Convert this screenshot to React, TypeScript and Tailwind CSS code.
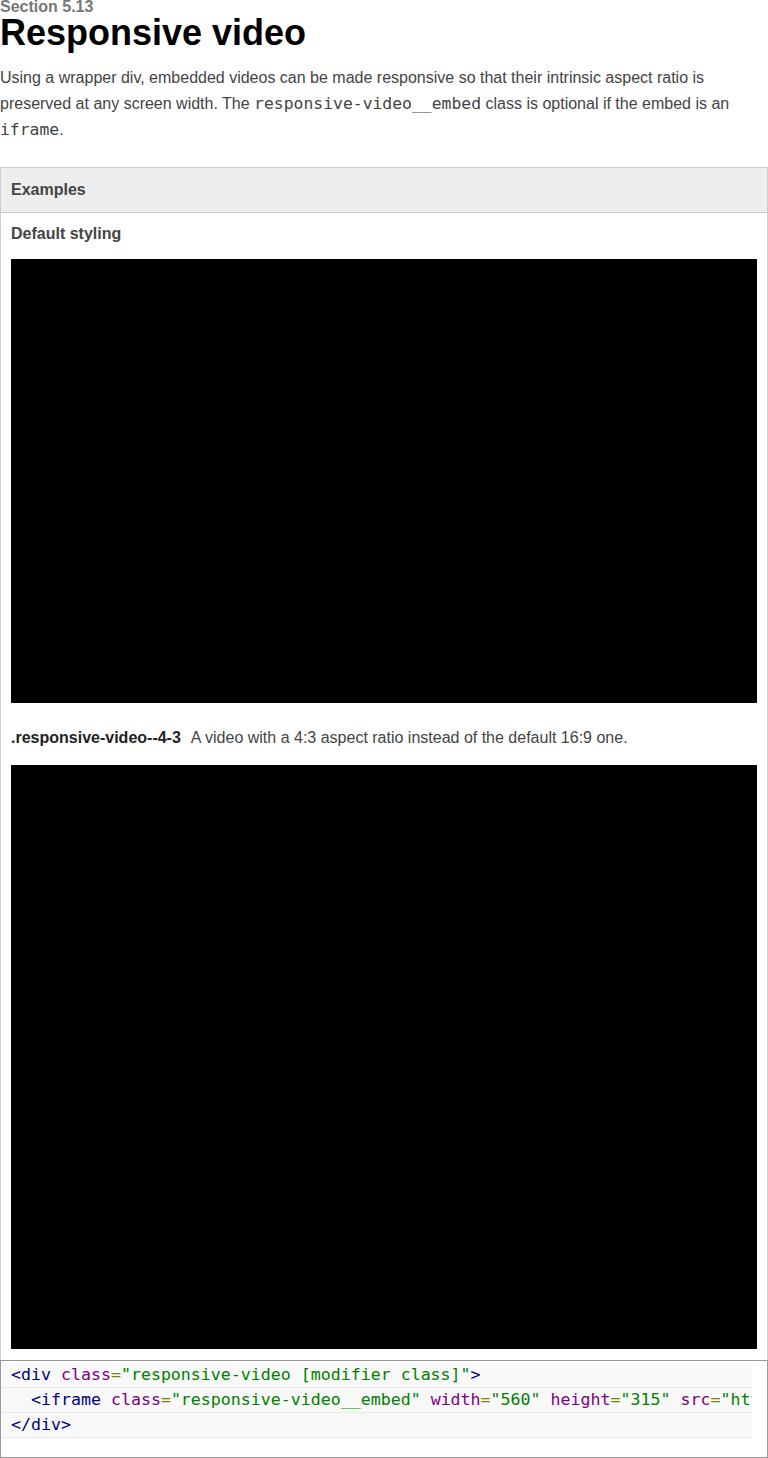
export default function App() {
  const sans = { fontFamily: '"Liberation Sans", Arial, sans-serif' };
  return (
    <main className="w-[768px] bg-white text-[#444]" style={sans}>
      <div className="text-[16px] leading-[14px] font-bold text-[#777]">Section 5.13</div>
      <h1 className="text-[36px] leading-[37px] font-bold text-black">Responsive video</h1>
      <p className="mt-[14px] text-[16px] leading-[26px] text-[#444]">
        Using a wrapper div, embedded videos can be made responsive so that their intrinsic aspect ratio is
        preserved at any screen width. The{" "}
        <code className="font-['DejaVu_Sans_Mono',monospace] text-[16.4px] leading-[20px]">responsive-video__embed</code> class is
        optional if the embed is an{" "}
        <code className="font-['DejaVu_Sans_Mono',monospace] text-[16.4px] leading-[20px]">iframe</code>.
      </p>

      <section className="mt-[24px]">
        <div className="border border-b-0 border-[#ccc]">
          <div className="h-[45px] flex items-center px-[10px] bg-[#eee] border-b border-[#ccc]">
            <span className="text-[16px] font-bold text-[#444]">Examples</span>
          </div>
          <div className="px-[10px] pt-[10px] pb-[11px]">
            <div className="text-[16px] leading-[22px] font-bold text-[#444]">Default styling</div>
            <div className="mt-[14px] h-[444px] bg-black" />
            <div className="mt-[24px] flex items-center text-[16px] leading-[22px]">
              <span className="font-bold text-[#222]">.responsive-video--4-3</span>
              <span className="ml-[10px] text-[#444]">A video with a 4:3 aspect ratio instead of the default 16:9 one.</span>
            </div>
            <div className="mt-[16px] h-[584px] bg-black" />
          </div>
        </div>

        <div className="border border-[#999] pt-[2px] pb-[19px] pr-[15px] overflow-hidden">
          <pre className="font-['DejaVu_Sans_Mono',monospace] text-[16.6px] leading-[24px] overflow-hidden">
            <div className="h-[25px] pl-[10px] bg-[#f8f8f8] border-b border-[#eaeaea] whitespace-pre">
              <span className="text-[#000080]">&lt;div</span>{" "}
              <span className="text-[#800080]">class</span>
              <span className="text-[#808000]">=</span>
              <span className="text-[#008000]">"responsive-video [modifier class]"</span>
              <span className="text-[#000080]">&gt;</span>
            </div>
            <div className="h-[25px] pl-[10px] bg-[#f8f8f8] border-b border-[#eaeaea] whitespace-pre">
              {"  "}
              <span className="text-[#000080]">&lt;iframe</span>{" "}
              <span className="text-[#800080]">class</span>
              <span className="text-[#808000]">=</span>
              <span className="text-[#008000]">"responsive-video__embed"</span>{" "}
              <span className="text-[#800080]">width</span>
              <span className="text-[#808000]">=</span>
              <span className="text-[#008000]">"560"</span>{" "}
              <span className="text-[#800080]">height</span>
              <span className="text-[#808000]">=</span>
              <span className="text-[#008000]">"315"</span>{" "}
              <span className="text-[#800080]">src</span>
              <span className="text-[#808000]">=</span>
              <span className="text-[#008000]">"https://www.youtube.com/embed/</span>
            </div>
            <div className="h-[25px] pl-[10px] bg-[#f8f8f8] border-b border-[#eaeaea] whitespace-pre">
              <span className="text-[#000080]">&lt;/div&gt;</span>
            </div>
          </pre>
        </div>
      </section>
    </main>
  );
}
